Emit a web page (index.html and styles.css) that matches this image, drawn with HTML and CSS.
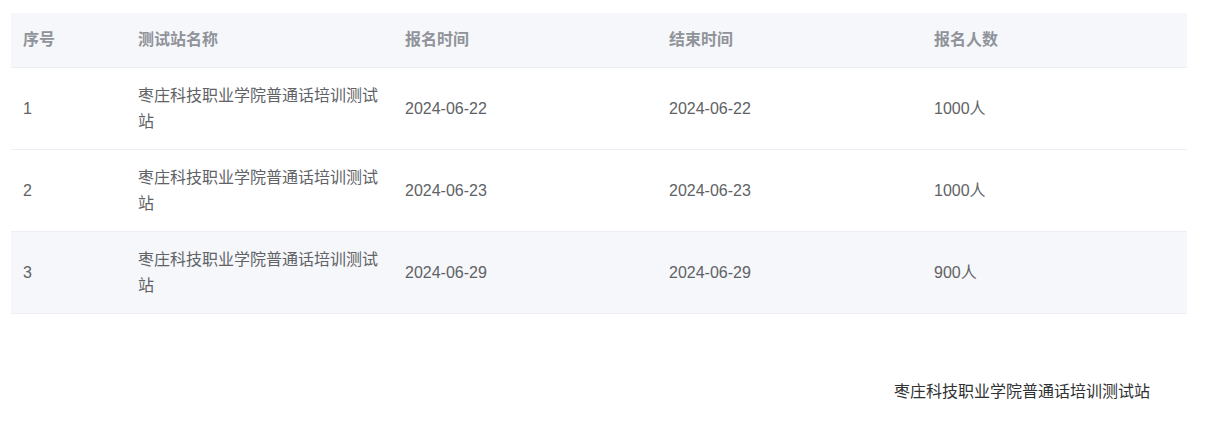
FILE: index.html
```html
<!DOCTYPE html>
<html lang="zh-CN">
<head>
<meta charset="utf-8">
<title>测试站</title>
<link rel="stylesheet" href="styles.css">
</head>
<body>
<div class="page">
  <table class="data-table">
    <colgroup>
      <col class="c-index">
      <col class="c-name">
      <col class="c-start">
      <col class="c-end">
      <col class="c-count">
    </colgroup>
    <thead>
      <tr>
        <th>序号</th>
        <th>测试站名称</th>
        <th>报名时间</th>
        <th>结束时间</th>
        <th>报名人数</th>
      </tr>
    </thead>
    <tbody>
      <tr>
        <td>1</td>
        <td>枣庄科技职业学院普通话培训测试站</td>
        <td>2024-06-22</td>
        <td>2024-06-22</td>
        <td>1000人</td>
      </tr>
      <tr>
        <td>2</td>
        <td>枣庄科技职业学院普通话培训测试站</td>
        <td>2024-06-23</td>
        <td>2024-06-23</td>
        <td>1000人</td>
      </tr>
      <tr class="row-hover">
        <td>3</td>
        <td>枣庄科技职业学院普通话培训测试站</td>
        <td>2024-06-29</td>
        <td>2024-06-29</td>
        <td>900人</td>
      </tr>
    </tbody>
  </table>
  <div class="footer">
    <span class="footer-text">枣庄科技职业学院普通话培训测试站</span>
  </div>
</div>
</body>
</html>
```

FILE: styles.css
```css
html, body {
  margin: 0;
  padding: 0;
  background: #ffffff;
}

body {
  font-family: "Liberation Sans", Arial, "Noto Sans CJK SC", sans-serif;
  font-size: 16px;
  color: #606266;
}

.page {
  padding: 13px 20px 0 11px;
}

.data-table {
  width: 1176px;
  border-collapse: collapse;
  table-layout: fixed;
}

.c-index { width: 115px; }
.c-name { width: 267px; }
.c-start { width: 264px; }
.c-end { width: 265px; }
.c-count { width: 265px; }

.data-table th,
.data-table td {
  padding: 14px 12px;
  line-height: 26px;
  text-align: left;
  vertical-align: middle;
  border-bottom: 1px solid #ebeef5;
  word-break: break-all;
}

.data-table td {
  padding-top: 14.5px;
  padding-bottom: 14.5px;
}

.data-table th {
  background: #f5f7fa;
  color: #909399;
  font-weight: bold;
}

.data-table td {
  color: #606266;
  font-weight: normal;
}

.data-table .row-hover td {
  background: #f5f7fa;
}

.footer {
  display: flex;
  justify-content: flex-end;
  margin-top: 66px;
  padding-right: 37px;
}

.footer-text {
  line-height: 24px;
  color: #303133;
}
```
